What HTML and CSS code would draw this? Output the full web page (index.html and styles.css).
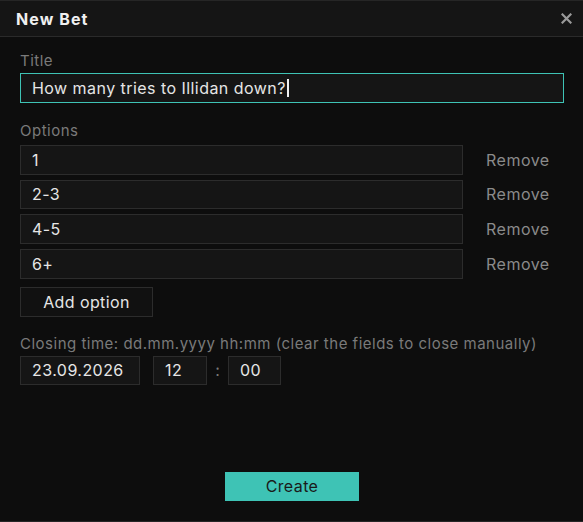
FILE: index.html
```html
<!DOCTYPE html>
<html>
<head>
<meta charset="utf-8">
<link rel="stylesheet" href="styles.css">
</head>
<body>
<div class="dialog">
  <div class="header">
    <div class="header-title">New Bet</div>
    <div class="close"><svg width="11" height="11" viewBox="0 0 11 11"><path d="M1.5 1.5L9.5 9.5M9.5 1.5L1.5 9.5" stroke="#9a9a9a" stroke-width="2.2" stroke-linecap="square"/></svg></div>
  </div>
  <div class="body">
    <div class="label label-title">Title</div>
    <div class="input input-focus">How many tries to Illidan down?<span class="caret"></span></div>
    <div class="label label-options">Options</div>
    <div class="options">
      <div class="option-row"><div class="input option-input">1</div><div class="remove">Remove</div></div>
      <div class="option-row"><div class="input option-input">2-3</div><div class="remove">Remove</div></div>
      <div class="option-row"><div class="input option-input">4-5</div><div class="remove">Remove</div></div>
      <div class="option-row"><div class="input option-input">6+</div><div class="remove">Remove</div></div>
    </div>
    <div class="btn add-btn">Add option</div>
    <div class="label label-closing">Closing time: dd.mm.yyyy hh:mm (clear the fields to close manually)</div>
    <div class="time-row">
      <div class="input date-input">23.09.2026</div>
      <div class="input hour-input">12</div>
      <div class="colon">:</div>
      <div class="input min-input">00</div>
    </div>
  </div>
  <div class="footer">
    <div class="create">Create</div>
  </div>
</div>
</body>
</html>
```
FILE: styles.css
```css
html, body {
  margin: 0;
  padding: 0;
  background: #0d0d0d;
}
body {
  font-family: Inter, "Noto Sans", sans-serif;
  color: #e4e4e4;
}
.dialog {
  width: 583px;
  height: 522px;
  box-sizing: border-box;
  border-top: 1px solid #262626;
  border-bottom: 1px solid #262626;
  background: #0d0d0d;
  display: flex;
  flex-direction: column;
}
.header {
  height: 35px;
  background: #151515;
  border-bottom: 1px solid #2a2a2a;
  display: flex;
  align-items: center;
  justify-content: space-between;
  padding: 0 11px 0 16px;
}
.header-title {
  font-weight: 700;
  font-size: 16px;
  letter-spacing: 1.1px;
  color: #f0f0f0;
}
.close {
  width: 11px;
  height: 11px;
  display: flex;
  margin-top: -1px;
}
.body {
  flex: 1;
  padding: 14.5px 19px 0 20px;
  display: flex;
  flex-direction: column;
  align-items: flex-start;
}
.label {
  font-size: 15px;
  line-height: 18px;
  color: #7a7a7a;
  letter-spacing: 0.5px;
}
.label-title { margin-bottom: 3.5px; }
.label-options { margin-top: 19px; margin-bottom: 5px; }
.label-closing { margin-top: 18px; margin-bottom: 3px; }
.input {
  box-sizing: border-box;
  height: 29px;
  background: #151515;
  border: 1px solid #2c2c2c;
  font-size: 16px;
  letter-spacing: 0.45px;
  color: #e6e6e6;
  display: flex;
  align-items: center;
  padding: 0 11px;
}
.input-focus {
  width: 544px;
  height: 30px;
  border-color: #3ec3b5;
}
.caret {
  display: inline-block;
  width: 2px;
  height: 18px;
  background: #f0f0f0;
  margin-left: 1px;
}
.options {
  width: 100%;
  display: flex;
  flex-direction: column;
  gap: 5px;
}
.option-row {
  display: flex;
  align-items: center;
}
.option-input {
  width: 443px;
  height: 29.67px;
}
.remove {
  margin-left: 23px;
  font-size: 16px;
  letter-spacing: 0.5px;
  color: #8a8a8a;
}
.btn {
  box-sizing: border-box;
  height: 30px;
  border: 1px solid #2c2c2c;
  background: #111;
  font-size: 16px;
  letter-spacing: 0.4px;
  color: #e6e6e6;
  display: flex;
  align-items: center;
  justify-content: center;
}
.add-btn {
  width: 133px;
  margin-top: 8px;
}
.time-row {
  display: flex;
  align-items: center;
}
.date-input { width: 120px; }
.hour-input { width: 54px; margin-left: 13px; }
.min-input { width: 53px; }
.colon {
  width: 21px;
  text-align: center;
  color: #7a7a7a;
  font-size: 16px;
}
.footer {
  display: flex;
  justify-content: center;
  padding-bottom: 20px;
}
.create {
  width: 134px;
  height: 29px;
  background: #3ec3b5;
  color: #1a1a1a;
  font-size: 16px;
  letter-spacing: 0.4px;
  display: flex;
  align-items: center;
  justify-content: center;
  margin-left: 1px;
  padding-bottom: 1px;
  box-sizing: border-box;
}
```
